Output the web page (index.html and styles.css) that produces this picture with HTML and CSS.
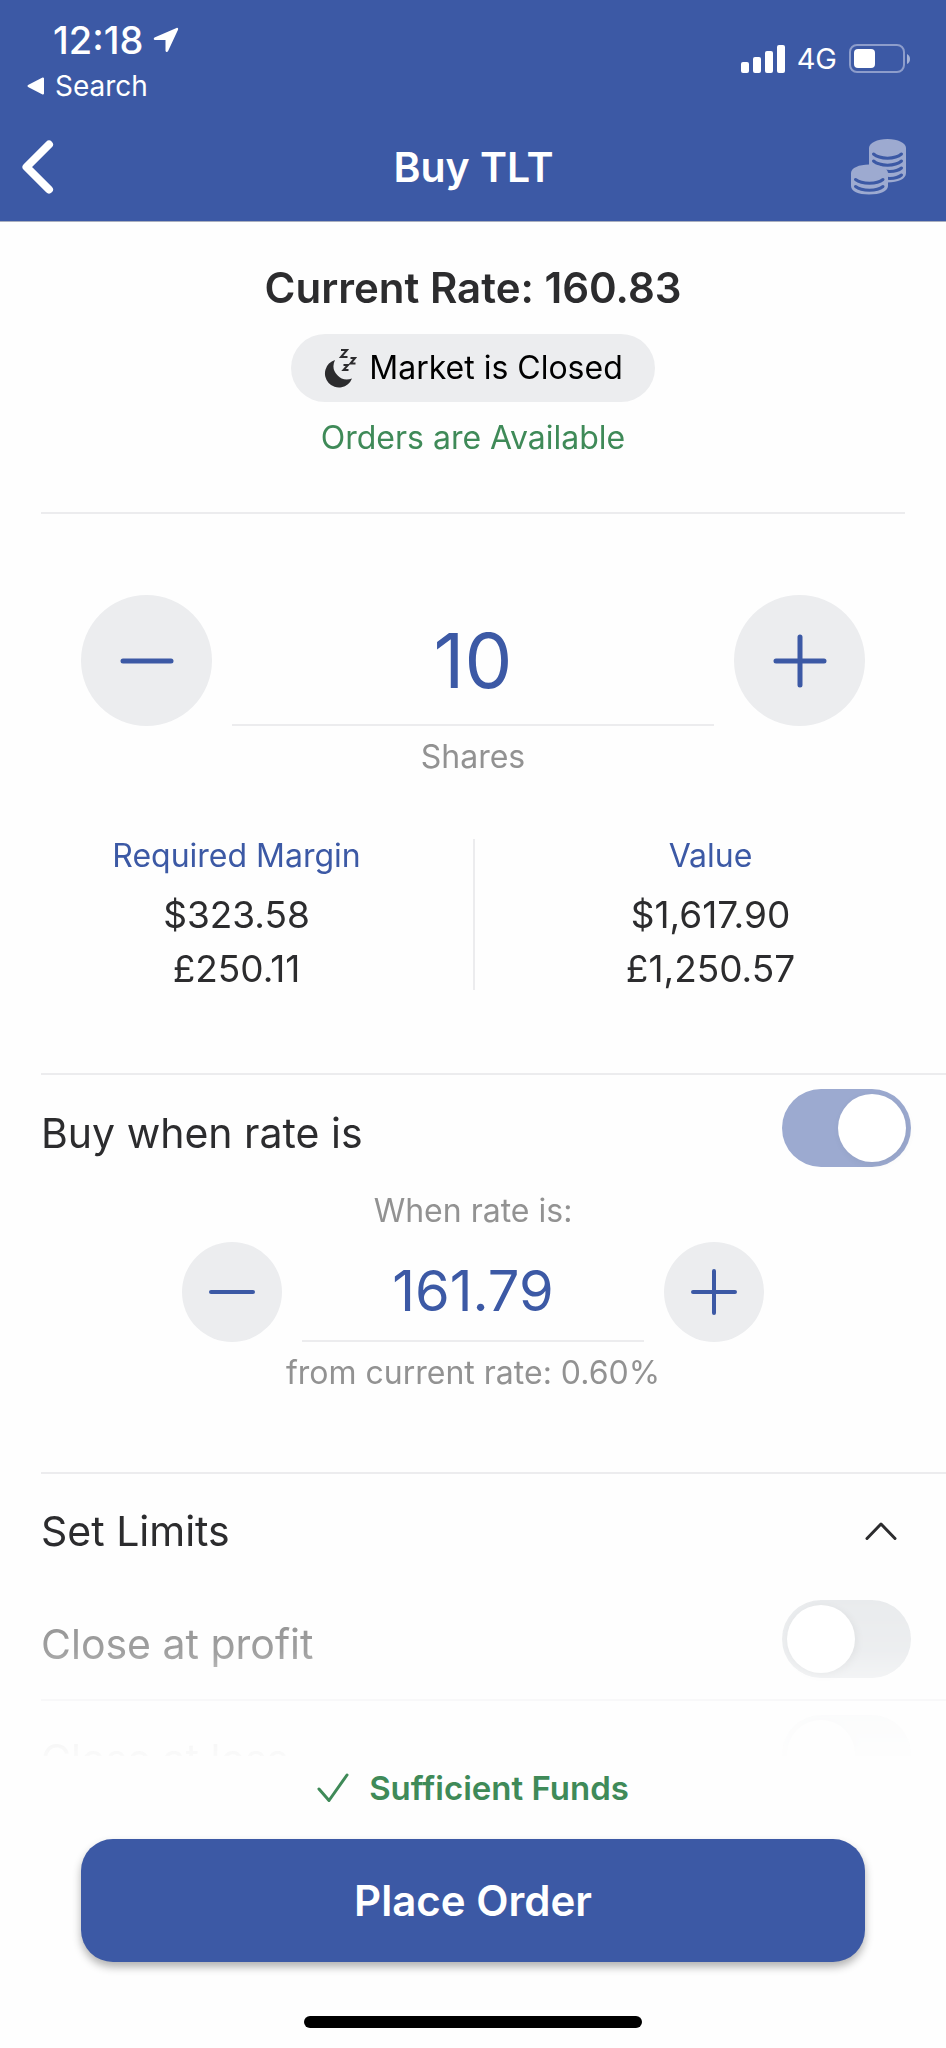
FILE: index.html
```html
<!DOCTYPE html>
<html lang="en">
<head>
<meta charset="utf-8">
<meta name="viewport" content="width=device-width, initial-scale=1">
<title>Buy TLT</title>
<link rel="stylesheet" href="styles.css">
</head>
<body>
<div class="app">
  <header class="header">
    <div class="status">
      <div class="status-left">
        <div class="clock"><span>12:18</span>
          <svg class="location" width="26" height="26" viewBox="0 0 26 26" aria-hidden="true"><path d="M23.500 1L1.500 10.500C.300 11.200.500 13 2 13H12.500V23.500C12.600 25.200 14.300 25.500 15 24.200L25 2.800C25.500 1.500 24.800.500 23.500 1Z" fill="currentColor"/></svg>
        </div>
        <a class="return" href="#">
          <svg width="18" height="18" viewBox="0 0 18 18" aria-hidden="true"><path d="M16 1.500V16.500L1.500 9Z" fill="currentColor" stroke="currentColor" stroke-width="2" stroke-linejoin="round"/></svg>
          <span>Search</span>
        </a>
      </div>
      <div class="status-right">
        <svg width="44" height="28" viewBox="0 0 44 28" fill="currentColor" role="img" aria-label="Signal strength"><rect y="17" width="8" height="11" rx="2"/><rect x="12" y="12" width="8" height="16" rx="2"/><rect x="24" y="6" width="8" height="22" rx="2"/><rect x="36" width="8" height="28" rx="2"/></svg>
        <span class="network">4G</span>
        <svg width="62" height="30" viewBox="0 0 62 30" role="img" aria-label="Battery"><rect x="1" y="1" width="54" height="27" rx="7" fill="none" stroke="#8d9dcb" stroke-width="2"/><rect x="5" y="5" width="21" height="19" rx="4" fill="#fff"/><path d="M58 10Q61 11.500 61 15T58 20Z" fill="#a5b2d6"/></svg>
      </div>
    </div>
    <div class="titlebar">
      <button class="icon-button" type="button" aria-label="Back"><svg width="32" height="54" viewBox="0 0 32 54" aria-hidden="true"><path d="M27 4.500L4.500 27L27 49.500" fill="none" stroke="#fff" stroke-width="8" stroke-linecap="round" stroke-linejoin="round"/></svg></button>
      <h1 class="title">Buy TLT</h1>
      <button class="icon-button icon-end" type="button" aria-label="Funds">
        <svg width="56" height="56" viewBox="0 0 56 56" aria-hidden="true">
          <path d="M18 9C18 4 26 0 36.500 0S55 4 55 9V34C55 40 47 43.500 36.500 43.500H18Z" fill="#9daad0"/>
          <path d="M22.500 15C29 20.500 44 20.500 50.500 15M22.500 22C29 27.500 44 27.500 50.500 22M33 32C40 33 47 32 50.500 29M33 39C40 40 47 39 50.500 36" fill="none" stroke="#3c59a5" stroke-width="3" stroke-linecap="round"/>
          <path d="M0 34C0 29 8 25.500 18 25.500S37 29 37 34V47C37 52 29 55.500 18 55.500S0 52 0 47Z" fill="#9daad0"/>
          <path d="M4.500 40.500C11 45.500 26 45.500 32 40.500M4.500 47.500C11 52.500 26 52.500 32 47.500" fill="none" stroke="#3c59a5" stroke-width="3" stroke-linecap="round"/>
        </svg>
      </button>
    </div>
  </header>

  <main class="content">
    <section class="rate">
      <h2 class="current">Current Rate: 160.83</h2>
      <div class="pill">
        <svg width="34" height="40" viewBox="0 0 34 40" fill="#2c2c2e" aria-hidden="true"><path d="M12 12A14 14 0 1 0 29 30.500A13.500 13.500 0 0 1 12 12Z"/><path d="M18 2H24L18 9H24.500M27.500 10H32L27.500 15.500H32.500M20.500 17H25L20.500 22H25.500" fill="none" stroke="#2c2c2e" stroke-width="2"/></svg>
        <span>Market is Closed</span>
      </div>
      <p class="available">Orders are Available</p>
    </section>

    <section class="amount">
      <div class="stepper">
        <button class="round" type="button" aria-label="Fewer shares"><svg width="54" height="54" viewBox="0 0 54 54" aria-hidden="true"><path d="M3 27H51"/></svg></button>
        <input class="number" id="shares" type="text" inputmode="numeric" value="10">
        <button class="round" type="button" aria-label="More shares"><svg width="54" height="54" viewBox="0 0 54 54" aria-hidden="true"><path d="M3 27H51M27 3V51"/></svg></button>
      </div>
      <label class="hint" for="shares">Shares</label>
      <dl class="totals">
        <div class="total"><dt>Required Margin</dt><dd>$323.58</dd><dd>£250.11</dd></div>
        <div class="total"><dt>Value</dt><dd>$1,617.90</dd><dd>£1,250.57</dd></div>
      </dl>
    </section>

    <section class="group condition">
      <div class="row">
        <label for="when">Buy when rate is</label>
        <input class="toggle" id="when" type="checkbox" checked>
      </div>
      <label class="hint" for="target">When rate is:</label>
      <div class="stepper small">
        <button class="round" type="button" aria-label="Lower rate"><svg width="46" height="46" viewBox="0 0 46 46" aria-hidden="true"><path d="M2 23H44"/></svg></button>
        <input class="number" id="target" type="text" inputmode="decimal" value="161.79">
        <button class="round" type="button" aria-label="Higher rate"><svg width="46" height="46" viewBox="0 0 46 46" aria-hidden="true"><path d="M2 23H44M23 2V44"/></svg></button>
      </div>
      <p class="hint">from current rate: 0.60%</p>
    </section>

    <section class="group">
      <button class="limits" type="button" aria-expanded="true">
        <span>Set Limits</span>
        <svg width="34" height="20" viewBox="0 0 34 20" aria-hidden="true"><path d="M3 17.500L17 3L31 17.500" fill="none" stroke="#2c2c2e" stroke-width="3" stroke-linecap="round" stroke-linejoin="round"/></svg>
      </button>
      <div class="row muted">
        <label for="profit">Close at profit</label>
        <input class="toggle" id="profit" type="checkbox">
      </div>
      <div class="row muted ruled">
        <label for="loss">Close at loss</label>
        <input class="toggle" id="loss" type="checkbox">
      </div>
    </section>
  </main>

  <footer class="footer">
    <p class="funds">
      <svg width="32" height="30" viewBox="0 0 32 30" aria-hidden="true"><path d="M2 16L12 27.500L30 2" fill="none" stroke="#3f8a58" stroke-width="3" stroke-linecap="round" stroke-linejoin="round"/></svg>
      <span>Sufficient Funds</span>
    </p>
    <button class="place" type="button">Place Order</button>
    <div class="home"></div>
  </footer>
</div>
</body>
</html>
```

FILE: styles.css
```css
* {
  box-sizing: border-box;
}

body,
h1,
h2,
p,
dl,
dd {
  margin: 0;
}

body {
  background: #fefefe;
  color: #2c2c2e;
  font-family: Inter, "Liberation Sans", sans-serif;
  font-size: 32px;
  line-height: 40px;
}

button,
input {
  border: 0;
  padding: 0;
  margin: 0;
  background: none;
  color: inherit;
  font: inherit;
}

svg {
  display: block;
  flex: none;
}

.app {
  display: flex;
  flex-direction: column;
  height: 100vh;
}

.header {
  flex: none;
  padding: 16px 35px 26px 22px;
  border-bottom: 1px solid #a9afbf;
  background: #3c59a5;
  color: #fff;
}

.status {
  display: flex;
  justify-content: space-between;
}

.clock {
  display: flex;
  align-items: center;
  gap: 10px;
  padding-left: 31px;
  font-size: 38px;
  font-weight: 500;
  line-height: 48px;
}

.return {
  display: flex;
  align-items: center;
  gap: 10px;
  padding-left: 5px;
  color: inherit;
  font-size: 28px;
  line-height: 44px;
  text-decoration: none;
}

.status-right {
  display: flex;
  align-items: center;
  gap: 12px;
  height: 85px;
}

.network {
  font-size: 29px;
}

.titlebar {
  display: grid;
  grid-template-columns: 1fr auto 1fr;
  align-items: center;
  padding: 31px 4px 0 0;
}

.icon-button {
  justify-self: start;
}

.icon-end {
  justify-self: end;
}

.title {
  padding-left: 18px;
  font-size: 41px;
  font-weight: 600;
  line-height: 56px;
}

.content {
  flex: 1;
  min-height: 0;
  overflow: hidden;
  mask-image: linear-gradient(to top, rgba(0, 0, 0, 0.04), rgba(0, 0, 0, 0.12) 40px, rgba(0, 0, 0, 0.85) 105px, #000 160px);
}

.rate {
  display: flex;
  flex-direction: column;
  align-items: center;
  gap: 16px;
  margin: 0 41px;
  padding: 36px 0 54px;
  border-bottom: 2px solid #ececee;
}

.current {
  font-size: 42px;
  font-weight: 600;
  line-height: 60px;
}

.pill {
  display: flex;
  align-items: center;
  gap: 12px;
  padding: 0 32px;
  border-radius: 34px;
  background: #ecedef;
  color: #000;
  line-height: 68px;
}

.available {
  color: #3f8a58;
}

.amount {
  padding: 81px 0 83px;
}

.stepper {
  display: grid;
  grid-template-columns: 131px 1fr 131px;
  gap: 20px;
  margin-bottom: 11px;
  padding: 0 81px;
}

.round {
  display: grid;
  place-items: center;
  aspect-ratio: 1;
  border-radius: 50%;
  background: #ecedef;
}

.round path {
  fill: none;
  stroke: #3c59a5;
  stroke-width: 5;
  stroke-linecap: round;
}

.number {
  min-width: 0;
  border-bottom: 2px solid #ececee;
  color: #3c59a5;
  font-size: 76px;
  text-align: center;
}

.small {
  grid-template-columns: 100px 1fr 100px;
  margin-top: 11px;
  padding: 0 182px;
}

.small .number {
  font-size: 56px;
}

.small .round path {
  stroke-width: 4;
}

.hint {
  display: block;
  color: #929292;
  text-align: center;
}

.totals {
  display: grid;
  grid-template-columns: 1fr 1fr;
  margin-top: 62px;
  text-align: center;
}

.total {
  display: grid;
  gap: 12px;
  font-size: 37px;
  line-height: 42px;
}

.total + .total {
  border-left: 2px solid #ececee;
}

.total dt {
  margin-bottom: 9px;
  color: #3c59a5;
  font-size: 32px;
  line-height: 34px;
}

.group::before {
  content: "";
  display: block;
  height: 2px;
  margin-left: 41px;
  background: #ececee;
}

.condition {
  padding-bottom: 79px;
}

.row {
  display: flex;
  align-items: flex-end;
  justify-content: space-between;
  margin-left: 41px;
  padding: 14px 35px 21px 0;
  font-size: 41px;
  line-height: 68px;
}

.condition .row {
  padding-bottom: 24px;
}

.muted {
  color: #8e8e8e;
}

.ruled {
  border-top: 2px solid #ececee;
}

.toggle {
  flex: none;
  display: flex;
  width: 129px;
  height: 78px;
  padding: 5px;
  border-radius: 39px;
  appearance: none;
  background: #e9ebed;
}

.toggle::before {
  content: "";
  width: 68px;
  height: 68px;
  border-radius: 50%;
  background: #fff;
  box-shadow: 2px 2px 8px rgba(0, 0, 0, 0.06);
}

.toggle:checked {
  justify-content: flex-end;
  background: #9caad0;
}

.limits {
  display: flex;
  align-items: center;
  justify-content: space-between;
  width: 100%;
  padding: 27px 48px 25px 41px;
  font-size: 41px;
  line-height: 60px;
}

.footer {
  flex: none;
  display: flex;
  flex-direction: column;
  padding: 12px 81px 20px;
}

.funds {
  display: flex;
  align-items: center;
  justify-content: center;
  gap: 20px;
  color: #3f8a58;
  font-size: 33px;
  font-weight: 600;
}

.place {
  margin: 31px 0 54px;
  border-radius: 32px;
  background: #3c59a5;
  box-shadow: 0 5px 8px rgba(0, 0, 0, 0.3);
  color: #fff;
  font-size: 42px;
  font-weight: 600;
  line-height: 123px;
}

.home {
  align-self: center;
  width: 338px;
  height: 12px;
  border-radius: 6px;
  background: #000;
}
```
